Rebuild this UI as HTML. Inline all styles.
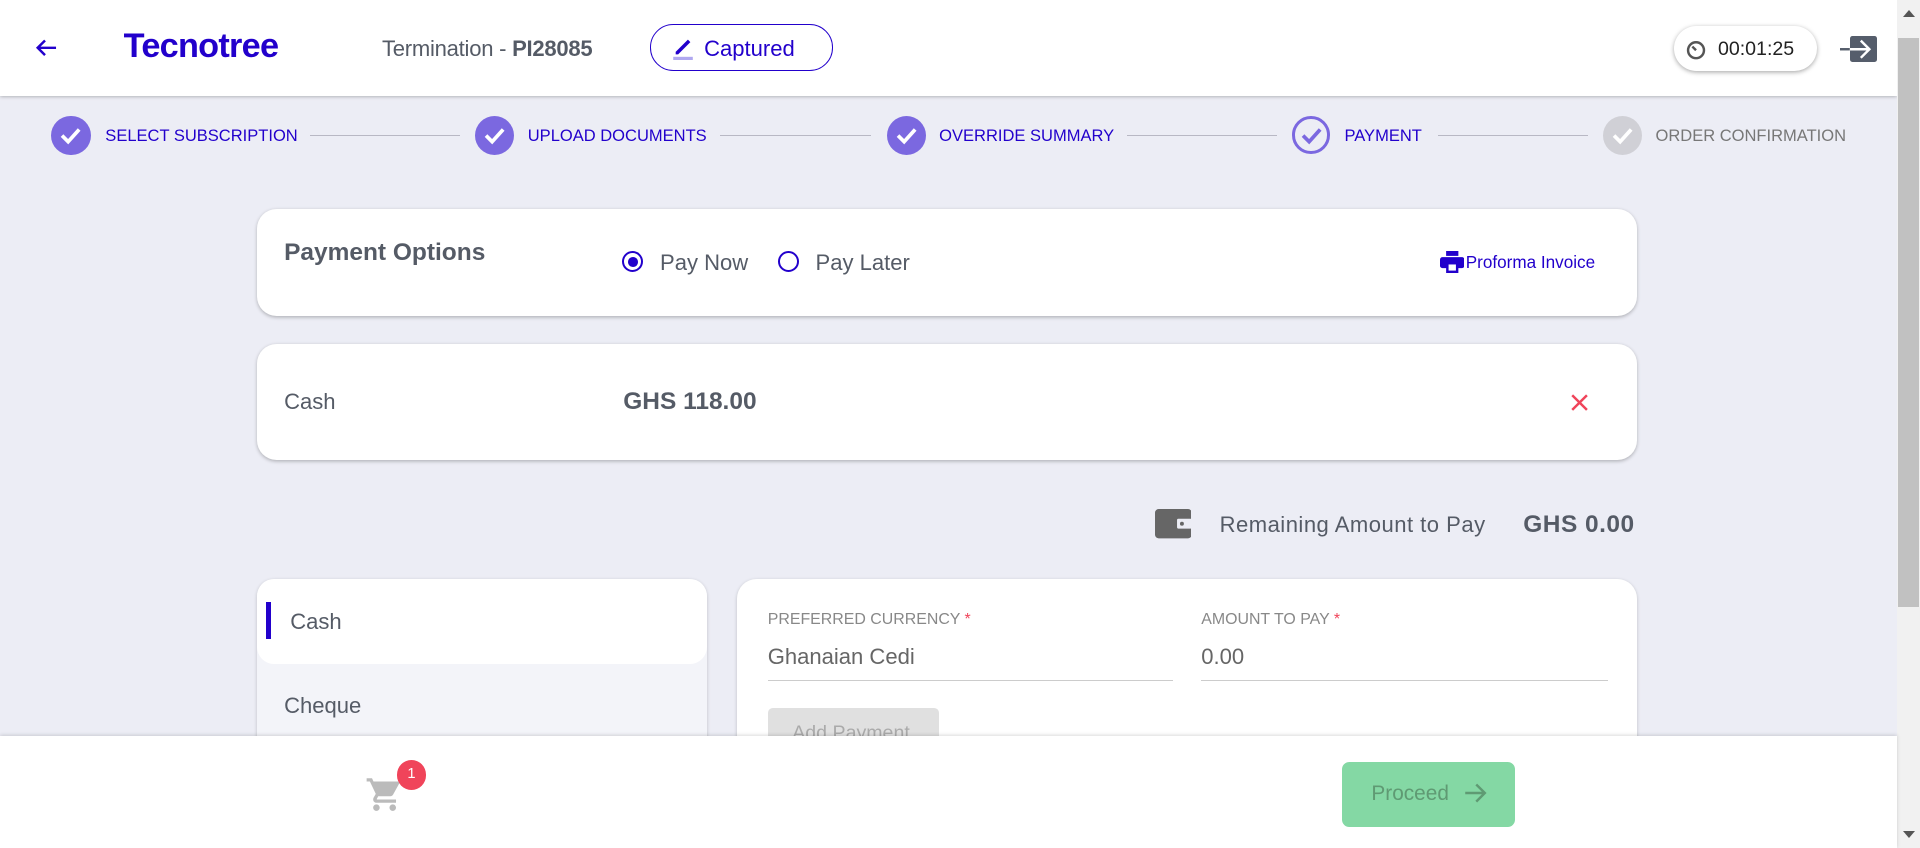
<!DOCTYPE html>
<html><head><meta charset="utf-8"><style>
html,body{margin:0;padding:0;width:1920px;height:848px;overflow:hidden;background:#ecedf5;}
#z{zoom:1.22449;width:1568px;height:693px;position:relative;font-family:"Liberation Sans",sans-serif;color:#555b66;overflow:hidden;}
.a{position:absolute;}
.hdr{left:0;top:0;width:1549px;height:78px;background:#fff;box-shadow:0 1px 3px rgba(0,0,0,.3);}
.card{background:#fff;border-radius:16px;box-shadow:0 1px 3px rgba(0,0,0,.25);}
.step{top:95px;width:32px;height:32px;border-radius:50%;background:#7b68e0;}
.lbl{top:103px;font-size:13.5px;color:#2200cc;}
.line{top:110px;height:1px;background:#b8b8c4;}
.radio{width:14px;height:14px;border:2px solid #2200cc;border-radius:50%;}
</style></head><body><div id="z">
<div class="a hdr"></div>
<svg class="a" style="left:28px;top:31px" width="20" height="16" viewBox="0 0 20 16"><path d="M18 8H3M9 2L3 8l6 6" stroke="#2200cc" stroke-width="2" fill="none"/></svg>
<div class="a" style="left:101px;top:22px;font-size:28px;font-weight:bold;color:#2200cc;letter-spacing:-0.6px">Tecnotree</div>
<div class="a" style="left:312px;top:29px;font-size:18px;letter-spacing:-0.2px">Termination - <b>PI28085</b></div>
<div class="a" style="left:531px;top:20px;width:148px;height:36px;border:1px solid #2200cc;border-radius:19px;"></div>
<svg class="a" style="left:549px;top:29px" width="18" height="20" viewBox="0 0 18 20"><path d="M3 13L13 3l2 2L5 15H3z" fill="#2200cc"/><rect x="1" y="17" width="16" height="3" fill="#b0a8f0"/></svg>
<div class="a" style="left:575px;top:29px;font-size:18px;color:#2200cc">Captured</div>
<div class="a" style="left:1367px;top:21px;width:117px;height:37px;border-radius:19px;background:#fff;box-shadow:0 1px 4px rgba(0,0,0,.35)"></div>
<svg class="a" style="left:1376px;top:31px" width="18" height="18" viewBox="0 0 18 18"><circle cx="9" cy="10" r="6.5" stroke="#555" stroke-width="2" fill="none"/><path d="M9 10L6 7" stroke="#555" stroke-width="2"/></svg>
<div class="a" style="left:1403px;top:31px;font-size:16px;color:#222">00:01:25</div>
<div class="a" style="left:1511px;top:29px;width:22px;height:22px;background:#555d6b;border-radius:2px"></div>
<svg class="a" style="left:1503px;top:30px" width="30" height="20" viewBox="0 0 30 20"><path d="M0 10H24M17 3l7 7-7 7" stroke="#fff" stroke-width="2" fill="none"/><path d="M0 10H8" stroke="#555d6b" stroke-width="2"/></svg>
<div class="a" style="left:1549px;top:0;width:19px;height:693px;background:#f1f1f1"></div>
<div class="a" style="left:1550px;top:31px;width:17px;height:465px;background:#c1c1c1"></div>
<div class="a" style="left:1554px;top:8px;border:5px solid transparent;border-bottom:6px solid #555;border-top:0"></div>
<div class="a" style="left:1554px;top:679px;border:5px solid transparent;border-top:6px solid #555;border-bottom:0"></div>

<div class="a step" style="left:42px"></div><div class="a step" style="left:388px"></div><div class="a step" style="left:724px"></div>
<div class="a step" style="left:1055px;background:none;border:3px solid #7b68e0;width:26px;height:26px"></div>
<div class="a step" style="left:1309px;background:#d0d0d6"></div>
<svg class="a" style="left:42px;top:95px" width="32" height="32"><path d="M9 16l5 5 9-10" stroke="#fff" stroke-width="3" fill="none"/></svg>
<svg class="a" style="left:388px;top:95px" width="32" height="32"><path d="M9 16l5 5 9-10" stroke="#fff" stroke-width="3" fill="none"/></svg>
<svg class="a" style="left:724px;top:95px" width="32" height="32"><path d="M9 16l5 5 9-10" stroke="#fff" stroke-width="3" fill="none"/></svg>
<svg class="a" style="left:1055px;top:95px" width="32" height="32"><path d="M9 16l5 5 9-10" stroke="#7b68e0" stroke-width="3" fill="none"/></svg>
<svg class="a" style="left:1309px;top:95px" width="32" height="32"><path d="M9 16l5 5 9-10" stroke="#fff" stroke-width="3" fill="none"/></svg>
<div class="a lbl" style="left:86px">SELECT SUBSCRIPTION</div>
<div class="a lbl" style="left:431px">UPLOAD DOCUMENTS</div>
<div class="a lbl" style="left:767px">OVERRIDE SUMMARY</div>
<div class="a lbl" style="left:1098px">PAYMENT</div>
<div class="a lbl" style="left:1352px;color:#777">ORDER CONFIRMATION</div>
<div class="a line" style="left:253px;width:123px"></div>
<div class="a line" style="left:588px;width:123px"></div>
<div class="a line" style="left:920px;width:123px"></div>
<div class="a line" style="left:1174px;width:123px"></div>

<div class="a card" style="left:210px;top:171px;width:1127px;height:87px"></div>
<div class="a" style="left:232px;top:195px;font-size:20px;font-weight:bold">Payment Options</div>
<div class="a radio" style="left:508px;top:205px"></div><div class="a" style="left:513px;top:210px;width:8px;height:8px;border-radius:50%;background:#2200cc"></div>
<div class="a" style="left:539px;top:204px;font-size:18px">Pay Now</div>
<div class="a radio" style="left:635px;top:205px"></div>
<div class="a" style="left:666px;top:204px;font-size:18px">Pay Later</div>
<svg class="a" style="left:1176px;top:205px" width="20" height="18" viewBox="0 0 20 18"><rect x="5" y="0" width="10" height="4" fill="#2200cc"/><rect x="0" y="5" width="20" height="9" rx="2" fill="#2200cc"/><rect x="5" y="10" width="10" height="8" fill="#2200cc"/><rect x="7" y="11" width="6" height="5" fill="#fff"/></svg>
<div class="a" style="left:1197px;top:206px;font-size:14px;color:#2200cc">Proforma Invoice</div>

<div class="a card" style="left:210px;top:281px;width:1127px;height:95px"></div>
<div class="a" style="left:232px;top:318px;font-size:18px">Cash</div>
<div class="a" style="left:509px;top:317px;font-size:20px;font-weight:bold">GHS 118.00</div>
<svg class="a" style="left:1283px;top:322px" width="14" height="14"><path d="M1 1l12 12M13 1L1 13" stroke="#f0445a" stroke-width="2"/></svg>

<svg class="a" style="left:943px;top:416px" width="30" height="24" viewBox="0 0 30 24"><rect x="0" y="0" width="30" height="24" rx="3" fill="#666"/><rect x="18" y="8" width="12" height="8" rx="1" fill="#ecedf5"/><circle cx="22" cy="12" r="1.6" fill="#666"/></svg>
<div class="a" style="left:996px;top:418px;font-size:18px;letter-spacing:0.4px">Remaining Amount to Pay</div>
<div class="a" style="left:1244px;top:417px;font-size:20px;font-weight:bold;letter-spacing:0.4px">GHS 0.00</div>

<div class="a" style="left:210px;top:473px;width:367px;height:220px;background:#f3f4f9;border-radius:14px 14px 0 0;box-shadow:0 1px 3px rgba(0,0,0,.2)"></div>
<div class="a" style="left:210px;top:473px;width:367px;height:69px;background:#fff;border-radius:14px"></div>
<div class="a" style="left:217px;top:492px;width:4px;height:30px;background:#2200cc"></div>
<div class="a" style="left:237px;top:497px;font-size:18px">Cash</div>
<div class="a" style="left:232px;top:566px;font-size:18px">Cheque</div>

<div class="a" style="left:602px;top:473px;width:735px;height:220px;background:#fff;border-radius:16px 16px 0 0;box-shadow:0 1px 3px rgba(0,0,0,.2)"></div>
<div class="a" style="left:627px;top:499px;font-size:13px;color:#888">PREFERRED CURRENCY <span style="color:#f0445a">*</span></div>
<div class="a" style="left:627px;top:526px;font-size:18px;color:#666">Ghanaian Cedi</div>
<div class="a" style="left:627px;top:555px;width:331px;height:1px;background:#ccc"></div>
<div class="a" style="left:981px;top:499px;font-size:13px;color:#888">AMOUNT TO PAY <span style="color:#f0445a">*</span></div>
<div class="a" style="left:981px;top:526px;font-size:18px;color:#666">0.00</div>
<div class="a" style="left:981px;top:555px;width:332px;height:1px;background:#ccc"></div>
<div class="a" style="left:627px;top:578px;width:140px;height:40px;background:#e0e0e0;border-radius:4px"></div>
<div class="a" style="left:647px;top:590px;font-size:16px;color:#aaa">Add Payment</div>

<div class="a" style="left:0;top:601px;width:1549px;height:92px;background:#fff;box-shadow:0 -1px 3px rgba(0,0,0,.15)"></div>
<svg class="a" style="left:298px;top:633px" width="32" height="32" viewBox="0 0 24 24"><path d="M7 18c-1.1 0-2 .9-2 2s.9 2 2 2 2-.9 2-2-.9-2-2-2zM1 2v2h2l3.6 7.6-1.4 2.4c-.1.3-.2.6-.2 1 0 1.1.9 2 2 2h12v-2H7.4c-.1 0-.2-.1-.2-.2v-.1l.9-1.7h7.4c.8 0 1.4-.4 1.7-1l3.6-6.5c.1-.2.1-.3.1-.5 0-.6-.4-1-1-1H5.2l-.9-2H1zm16 16c-1.1 0-2 .9-2 2s.9 2 2 2 2-.9 2-2-.9-2-2-2z" fill="#bbb"/></svg>
<div class="a" style="left:324px;top:621px;width:24px;height:24px;border-radius:50%;background:#f0445a;color:#fff;font-size:12px;text-align:center;line-height:24px">1</div>
<div class="a" style="left:1096px;top:622px;width:141px;height:53px;background:#84d8a4;border-radius:6px"></div>
<div class="a" style="left:1120px;top:639px;font-size:17px;color:#5f9a73">Proceed</div>
<svg class="a" style="left:1196px;top:639px" width="20" height="18"><path d="M1 9h16M10 2l7 7-7 7" stroke="#5f9a73" stroke-width="2" fill="none"/></svg>
</div></body></html>
